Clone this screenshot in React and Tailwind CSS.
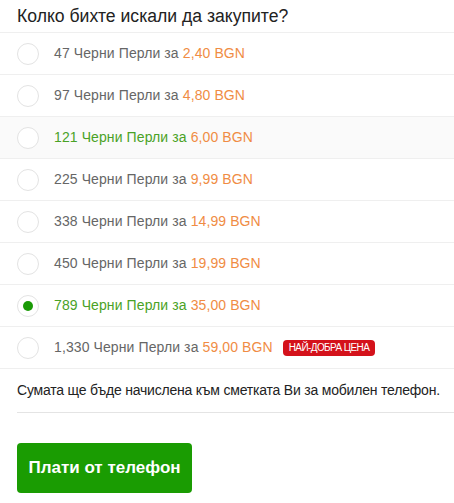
import React from "react";

const packs = [
  { n: "47", price: "2,40" },
  { n: "97", price: "4,80" },
  { n: "121", price: "6,00", hover: true },
  { n: "225", price: "9,99" },
  { n: "338", price: "14,99" },
  { n: "450", price: "19,99" },
  { n: "789", price: "35,00", selected: true },
  { n: "1,330", price: "59,00", best: true },
];

const Row = ({ pack }) => {
  const green = pack.hover || pack.selected;
  return (
    <div
      className={`flex items-center h-[42px] border-t border-[#efefef] pl-[17px] ${
        pack.hover ? "bg-[#fafafa]" : ""
      }`}
    >
      <span className="w-[22px] h-[22px] rounded-full border border-[#e3e3e3] bg-white flex items-center justify-center shrink-0">
        {pack.selected && <span className="w-[10px] h-[10px] rounded-full bg-[#1a9a06]" />}
      </span>
      <span className={`ml-[15px] text-[14px] tracking-[0.1px] ${green ? "text-[#4aa226]" : "text-[#666]"}`}>
        {pack.n} Черни Перли за <span className="text-[#f08c44]">{pack.price} BGN</span>
      </span>
      {pack.best && (
        <span className="ml-[10px] h-[16px] px-[6px] rounded-[4px] bg-[#d4121b] text-white text-[10px] tracking-[-0.6px] flex items-center leading-none">
          НАЙ-ДОБРА ЦЕНА
        </span>
      )}
    </div>
  );
};

export default function App() {
  return (
    <div className="w-[454px] h-[503px] bg-white font-['Liberation_Sans',Arial,sans-serif]">
      <h1 className="h-[32px] pl-[17px] text-[17.6px] leading-[32px] text-[#222]">
        Колко бихте искали да закупите?
      </h1>
      <div className="border-b border-[#efefef]">
        {packs.map((p) => (
          <Row key={p.n} pack={p} />
        ))}
      </div>
      <p className="pl-[17px] pt-[13px] text-[14px] tracking-[-0.2px] leading-[16px] text-[#222]">
        Сумата ще бъде начислена към сметката Ви за мобилен телефон.
      </p>
      <div className="ml-[17px] mt-[14px] border-t border-[#e4e4e4]" />
      <div className="pl-[17px] pt-[30px]">
        <button className="w-[175px] h-[50px] rounded-[4px] bg-[#1a9c02] text-white font-bold text-[17px]">
          Плати от телефон
        </button>
      </div>
    </div>
  );
}
